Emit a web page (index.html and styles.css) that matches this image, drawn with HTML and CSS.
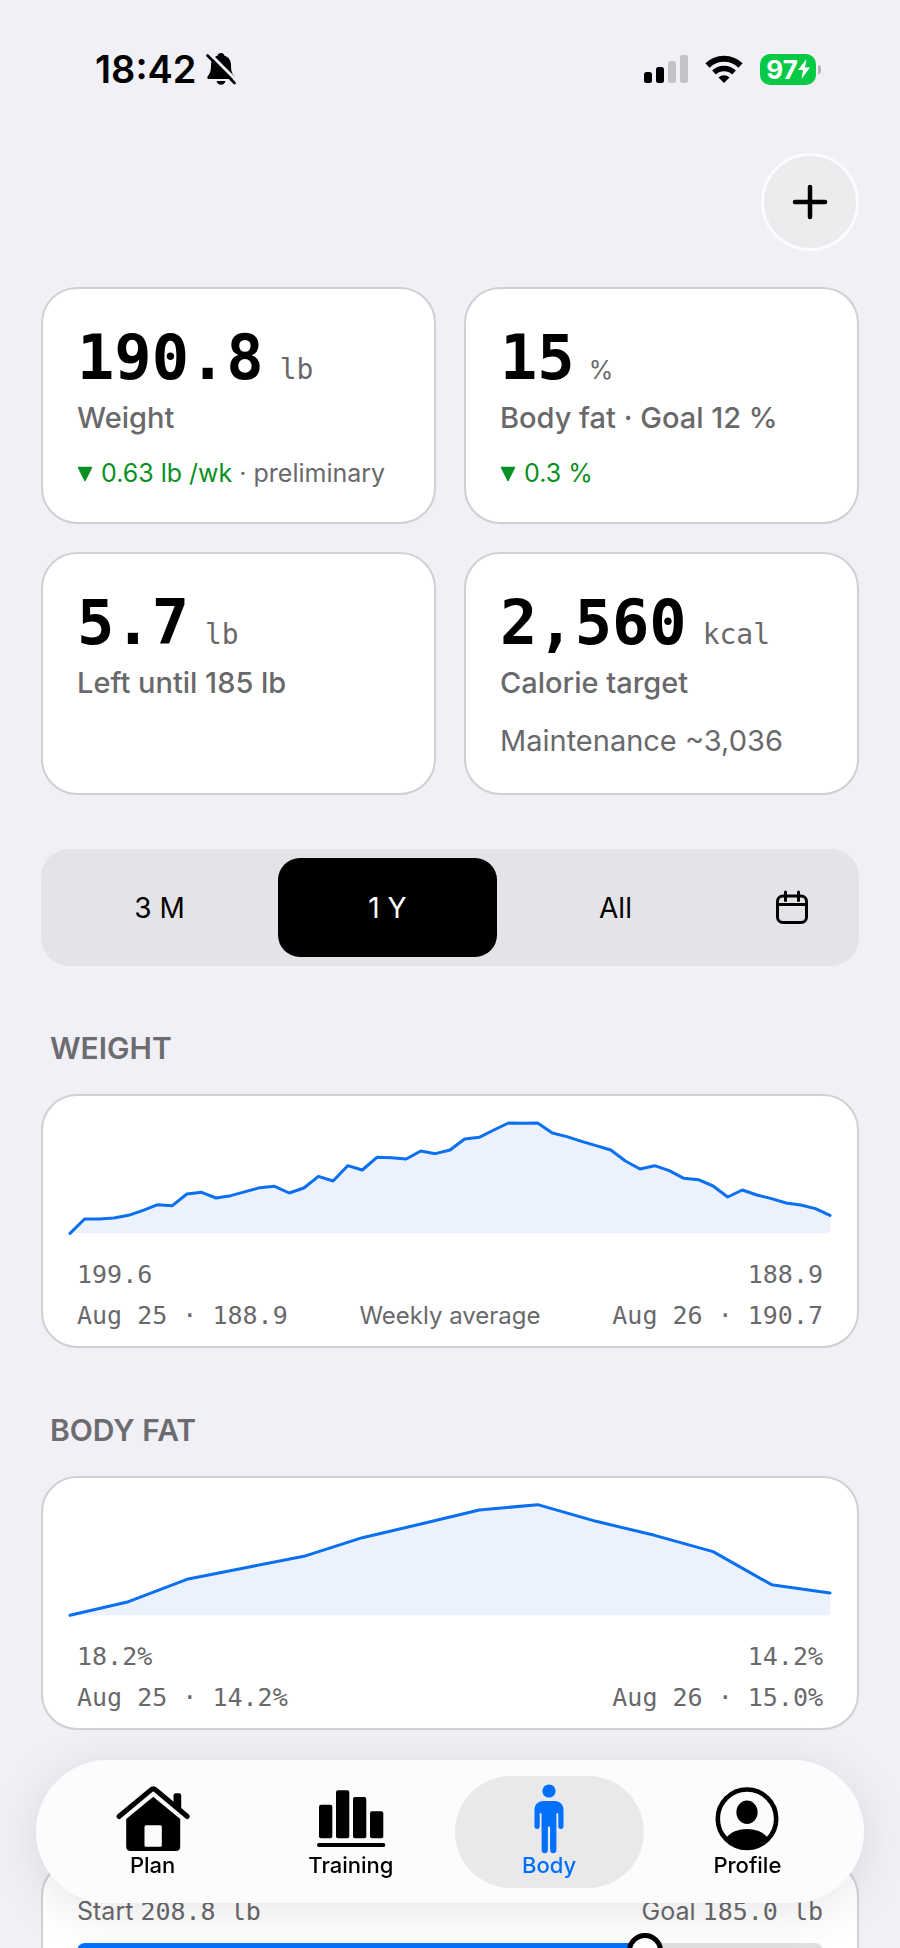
FILE: index.html
```html
<!DOCTYPE html>
<html lang="en">
<head>
  <meta charset="UTF-8" />
  <meta name="viewport" content="width=device-width, initial-scale=1.0"/>
  <title>Body</title>
  <link rel="stylesheet" href="styles.css">
</head>
<body>
  <div class="app">
    <div class="status-bar">
      <div class="status-left">
        <span class="time">18:42</span>
        <svg class="bell" viewBox="0 0 30 32" aria-hidden="true">
          <path d="M15 0c1.900 0 3.200 1.200 3.500 2.700C22.800 4.100 25 7.500 25 12c0 7 1.500 9 3.400 11.500.8 1.200.2 2.500-1.200 2.500H2.800c-1.400 0-2-1.300-1.200-2.500C3.500 21 5 19 5 12c0-4.500 2.200-7.900 6.500-9.300C11.800 1.200 13.100 0 15 0z"/>
          <path d="M10.500 28h9c-.6 2.300-2.300 3.800-4.500 3.800S11.100 30.300 10.500 28z"/>
          <path d="M3.500.500L30.500 27.500" stroke="#f1f0f6" stroke-width="3"/>
          <path d="M1.500 2.500L28.500 30" stroke="#000" stroke-width="2.600" stroke-linecap="round"/>
        </svg>
      </div>
      <div class="status-right">
        <svg class="signal" viewBox="0 0 44 28" aria-hidden="true">
          <rect x="0" y="17" width="8" height="11" rx="2.500"/>
          <rect x="12" y="12" width="8" height="16" rx="2.500"/>
          <rect x="24" y="6" width="8" height="22" rx="2.500" fill="#c3c2c8"/>
          <rect x="36" y="0" width="8" height="28" rx="2.500" fill="#c3c2c8"/>
        </svg>
        <svg class="wifi" viewBox="0 0 38 28" aria-hidden="true">
          <path d="M2.500 10.500a23.500 23.500 0 0 1 33 0" fill="none" stroke="#000" stroke-width="6"/>
          <path d="M9 17.500a14.500 14.500 0 0 1 20 0" fill="none" stroke="#000" stroke-width="5.500"/>
          <path d="M19 28l-5.500-5.600a8 8 0 0 1 11 0z"/>
        </svg>
        <div class="battery">
          <span>97</span>
          <svg class="bolt" viewBox="0 0 12 20" aria-hidden="true"><path d="M8.500 0L0 11h5L3.500 20 12 8.500H7z" fill="#fff"/></svg>
        </div>
      </div>
    </div>

    <div class="toolbar">
      <button type="button" class="add-button" aria-label="Add entry">
        <svg viewBox="0 0 34 34"><path d="M17 2v30M2 17h30"/></svg>
      </button>
    </div>

    <main>
      <div class="stats">
        <div class="card stat">
          <div class="value">190.8<span class="unit">lb</span></div>
          <div class="label">Weight</div>
          <div class="trend"><span class="down"><svg viewBox="0 0 16 16"><path d="M1.500 1.500h13L8 14.500z"/></svg>0.63 lb /wk</span> · preliminary</div>
        </div>
        <div class="card stat">
          <div class="value">15<span class="unit unit-percent">%</span></div>
          <div class="label">Body fat · Goal 12 %</div>
          <div class="trend"><span class="down"><svg viewBox="0 0 16 16"><path d="M1.500 1.500h13L8 14.500z"/></svg>0.3 %</span></div>
        </div>
        <div class="card stat">
          <div class="value">5.7<span class="unit">lb</span></div>
          <div class="label">Left until 185 lb</div>
        </div>
        <div class="card stat">
          <div class="value">2,560<span class="unit">kcal</span></div>
          <div class="label">Calorie target</div>
          <div class="note">Maintenance ~3,036</div>
        </div>
      </div>

      <div class="range-tabs">
        <button type="button">3 M</button>
        <button type="button" class="active">1 Y</button>
        <button type="button">All</button>
        <button type="button" class="calendar" aria-label="Custom range">
          <svg viewBox="0 0 32 32"><rect x="1.500" y="4" width="29" height="26.500" rx="5.500"/><path d="M1.500 12.500h29M9.500 0v8.500M22.500 0v8.500"/></svg>
        </button>
      </div>

      <h2>WEIGHT</h2>
      <div class="card chart-card">
        <svg class="chart" viewBox="0 0 52 336" preserveAspectRatio="none" aria-hidden="true">
          <polygon points="0,334 1,291 2,291 3,288 4,280 5,265 6,248 7,251 8,216 9,211 10,228 11,221 12,209 13,197 14,193 15,213 16,198 17,163 18,177 19,131 20,144 21,106 22,107 23,111 24,87 25,95 26,84 27,51 28,46 29,24 30,3 31,4 32,3 33,33 34,44 35,58 36,71 37,84 38,117 39,141 40,131 41,146 42,169 43,173 44,192 45,225 46,204 47,219 48,230 49,243 50,249 51,260 52,280 52,334"/>
          <polyline points="0,334 1,291 2,291 3,288 4,280 5,265 6,248 7,251 8,216 9,211 10,228 11,221 12,209 13,197 14,193 15,213 16,198 17,163 18,177 19,131 20,144 21,106 22,107 23,111 24,87 25,95 26,84 27,51 28,46 29,24 30,3 31,4 32,3 33,33 34,44 35,58 36,71 37,84 38,117 39,141 40,131 41,146 42,169 43,173 44,192 45,225 46,204 47,219 48,230 49,243 50,249 51,260 52,280"/>
        </svg>
        <div class="chart-row"><span>199.6</span><span>188.9</span></div>
        <div class="chart-row"><span>Aug 25 · 188.9</span><span class="caption">Weekly average</span><span>Aug 26 · 190.7</span></div>
      </div>

      <h2>BODY FAT</h2>
      <div class="card chart-card">
        <svg class="chart" viewBox="0 0 13 336" preserveAspectRatio="none" aria-hidden="true">
          <polygon points="0,334 1,293 2,226 3,191 4,157 5,101 6,60 7,18 8,2 9,52 10,94 11,143 12,242 13,267 13,334"/>
          <polyline points="0,334 1,293 2,226 3,191 4,157 5,101 6,60 7,18 8,2 9,52 10,94 11,143 12,242 13,267"/>
        </svg>
        <div class="chart-row"><span>18.2%</span><span>14.2%</span></div>
        <div class="chart-row"><span>Aug 25 · 14.2%</span><span>Aug 26 · 15.0%</span></div>
      </div>

      <div class="card goal-card">
        <div class="goal-row">
          <span><span class="caption">Start </span>208.8 lb</span>
          <span><span class="caption">Goal </span>185.0 lb</span>
        </div>
        <input type="range" class="goal-range" min="0" max="1000" value="774" aria-label="Progress to goal weight">
      </div>
    </main>

    <nav class="tab-bar">
      <a href="#plan">
        <svg viewBox="0 0 74 70">
          <path d="M37.200 14.700L64.200 37v27.500q0 4.500-4.500 4.500h-45q-4.500 0-4.500-4.500V37z"/>
          <path d="M57.500 24V13.500q0-2.200 2.200-2.200h3.300q2.200 0 2.200 2.200V30z"/>
          <path d="M3 34.500L35 7.800q2.200-1.800 4.400 0L71.300 34.500" fill="none" stroke="#000" stroke-width="5" stroke-linecap="round"/>
          <rect x="28.500" y="43.300" width="17.300" height="21.500" rx="1.500" fill="#fcfcfe"/>
        </svg>
        Plan
      </a>
      <a href="#training">
        <svg viewBox="0 0 74 70">
          <rect x="5" y="22.700" width="13.300" height="33.600" rx="2"/>
          <rect x="22" y="8.300" width="13.300" height="48" rx="2"/>
          <rect x="39" y="15" width="13.300" height="41.300" rx="2"/>
          <rect x="56" y="29.300" width="13.300" height="27" rx="2"/>
          <rect x="3" y="61" width="68.300" height="4" rx="2"/>
        </svg>
        Training
      </a>
      <a href="#body" class="active">
        <svg viewBox="0 0 74 70">
          <circle cx="37" cy="9" r="6.600"/>
          <path d="M31.500 19h11c5.500 0 9 3.500 9 9v16.300a2.600 2.600 0 0 1-5.200 0V32a.9.900 0 0 0-1.900 0v36a2.900 2.900 0 0 1-6.300 0V45.500a1 1 0 0 0-2.200 0V68a2.900 2.900 0 0 1-6.300 0V32a.9.900 0 0 0-1.900 0v12.300a2.600 2.600 0 0 1-5.200 0V28c0-5.500 3.500-9 9-9z"/>
        </svg>
        Body
      </a>
      <a href="#profile">
        <svg viewBox="0 0 74 70">
          <circle cx="37" cy="36.700" r="29.200" fill="none" stroke="#000" stroke-width="4.600"/>
          <ellipse cx="37" cy="30.300" rx="10.600" ry="11.700"/>
          <path d="M16.500 55.500C21 49.800 29 47 37 47s16 2.800 20.500 8.500C52.500 62.500 45 66 37 66s-15.500-3.500-20.500-10.500z"/>
        </svg>
        Profile
      </a>
    </nav>
  </div>
</body>
</html>
```
FILE: styles.css
```css
* {
  box-sizing: border-box;
}
body {
  margin: 0;
  background-color: #f1f0f6;
  color: #000;
  font-family: Inter, "Liberation Sans", sans-serif;
}
button {
  margin: 0;
  padding: 0;
  border: none;
  color: inherit;
  font: inherit;
}
svg {
  display: block;
  overflow: visible;
}
.app {
  height: 100vh;
  padding: 0 41px;
  overflow: hidden;
}

/* status bar */
.status-bar {
  display: flex;
  justify-content: space-between;
  align-items: center;
  padding: 46px 38px 0 54px;
  height: 92px;
}
.status-left, .status-right {
  display: flex;
  align-items: center;
}
.status-left {
  gap: 9px;
}
.status-right {
  gap: 17px;
}
.time {
  font-size: 38px;
  font-weight: 600;
  line-height: 46px;
}
.bell {
  width: 30px;
  height: 32px;
}
.signal {
  width: 44px;
  height: 28px;
}
.wifi {
  width: 38px;
  height: 28px;
}
.battery {
  position: relative;
  display: flex;
  align-items: center;
  justify-content: center;
  width: 56px;
  height: 31px;
  margin-right: 5px;
  border-radius: 10px;
  background: #06ca46;
  color: #fff;
  font-size: 26px;
  font-weight: 700;
  line-height: 31px;
}
.battery::after {
  content: "";
  position: absolute;
  right: -5px;
  top: 11px;
  width: 3px;
  height: 9px;
  border-radius: 0 3px 3px 0;
  background: #b5b4ba;
}
.bolt {
  width: 12px;
  height: 20px;
}

.toolbar {
  display: flex;
  justify-content: flex-end;
  margin: 61px 0 36px;
}
.add-button {
  display: flex;
  align-items: center;
  justify-content: center;
  width: 98px;
  height: 98px;
  border: 3px solid #fcfcfe;
  border-radius: 50%;
  background: #ececef;
}
.add-button svg {
  width: 34px;
  height: 34px;
  fill: none;
  stroke: #000;
  stroke-width: 4.5;
  stroke-linecap: round;
}

/* cards */
.card {
  border: 2px solid #d0d0d3;
  border-radius: 36px;
  background: #fff;
  color: #69696b;
}
.stats {
  display: grid;
  grid-template-columns: 1fr 1fr;
  gap: 28px;
}
.stat {
  padding: 33px 34px 34px;
  white-space: nowrap;
}
.value {
  color: #000;
  font-family: "DejaVu Sans Mono", monospace;
  font-size: 62px;
  font-weight: 700;
  line-height: 72px;
}
.unit {
  margin-left: 16px;
  color: #69696b;
  font-size: 28px;
  font-weight: 400;
  line-height: 36px;
}
.unit-percent {
  margin-left: 14px;
  font-family: Inter, sans-serif;
  font-size: 25px;
}
.label {
  margin-top: 6px;
  font-size: 29px;
  font-weight: 500;
  line-height: 36px;
}
.trend {
  margin-top: 22px;
  font-size: 25px;
  line-height: 30px;
}
.down {
  color: #0a8f22;
}
.down svg {
  display: inline-block;
  width: 16px;
  height: 16px;
  margin-right: 8px;
  fill: #0a8f22;
  stroke: #0a8f22;
  stroke-width: 1.5;
  stroke-linejoin: round;
}
.note {
  margin-top: 22px;
  font-size: 29px;
  line-height: 36px;
}

.range-tabs {
  display: flex;
  gap: 9px;
  margin-top: 54px;
  padding: 9px;
  border-radius: 28px;
  background: #e4e3e8;
}
.range-tabs button {
  display: flex;
  flex: 1;
  align-items: center;
  justify-content: center;
  height: 99px;
  border-radius: 22px;
  background: none;
  font-size: 28px;
}
.range-tabs .active {
  background: #000;
  color: #fff;
}
.range-tabs .calendar {
  flex: 0 0 116px;
}
.calendar svg {
  width: 32px;
  height: 32px;
  fill: none;
  stroke: #000;
  stroke-width: 3;
  stroke-linecap: round;
}

h2 {
  margin: 64px 9px 28px;
  color: #6c6c70;
  font-size: 30px;
  font-weight: 600;
  line-height: 36px;
}
.chart-card {
  padding: 26px 27px 10px;
}
.chart {
  width: 100%;
  height: 112px;
  margin-bottom: 20px;
}
.chart polygon {
  fill: #ebf2fe;
}
.chart polyline {
  fill: none;
  stroke: #0a6ff0;
  stroke-width: 3;
  stroke-linecap: round;
  stroke-linejoin: round;
  vector-effect: non-scaling-stroke;
}
.chart-row, .goal-row {
  display: flex;
  justify-content: space-between;
  font-family: "DejaVu Sans Mono", monospace;
  font-size: 25px;
  line-height: 41px;
}
.chart-row {
  padding: 0 7px;
}
.caption {
  font-family: Inter, sans-serif;
}
.chart-row .caption {
  font-size: 24px;
}

.goal-card {
  margin-top: 130px;
  padding: 29px 34px 34px;
}
.goal-range {
  display: block;
  width: 100%;
  height: 36px;
  margin: 1px 0 0;
  background: none;
  appearance: none;
}
.goal-range::-webkit-slider-runnable-track {
  height: 16px;
  border-radius: 8px;
  background: linear-gradient(to right, #0070fb 76%, #e0e0e2 76%);
}
.goal-range::-webkit-slider-thumb {
  width: 36px;
  height: 36px;
  margin-top: -10px;
  border: 5px solid #000;
  border-radius: 50%;
  background: #fff;
  appearance: none;
}

/* floating tab bar */
.tab-bar {
  position: fixed;
  left: 36px;
  right: 36px;
  bottom: 45px;
  display: flex;
  gap: 9px;
  padding: 16px 22px 15px;
  border-radius: 72px;
  background: #fcfcfe;
  box-shadow: 0 8px 50px rgba(0,0,0,0.1);
}
.tab-bar a {
  display: flex;
  flex: 1;
  flex-direction: column;
  align-items: center;
  padding: 6px 0 10px;
  border-radius: 56px;
  color: #000;
  font-size: 22px;
  font-weight: 500;
  line-height: 26px;
  text-decoration: none;
}
.tab-bar svg {
  width: 74px;
  height: 70px;
}
.tab-bar .active {
  background: #e9e9ec;
  color: #0070fb;
}
.tab-bar .active svg {
  fill: #0070fb;
}
```
